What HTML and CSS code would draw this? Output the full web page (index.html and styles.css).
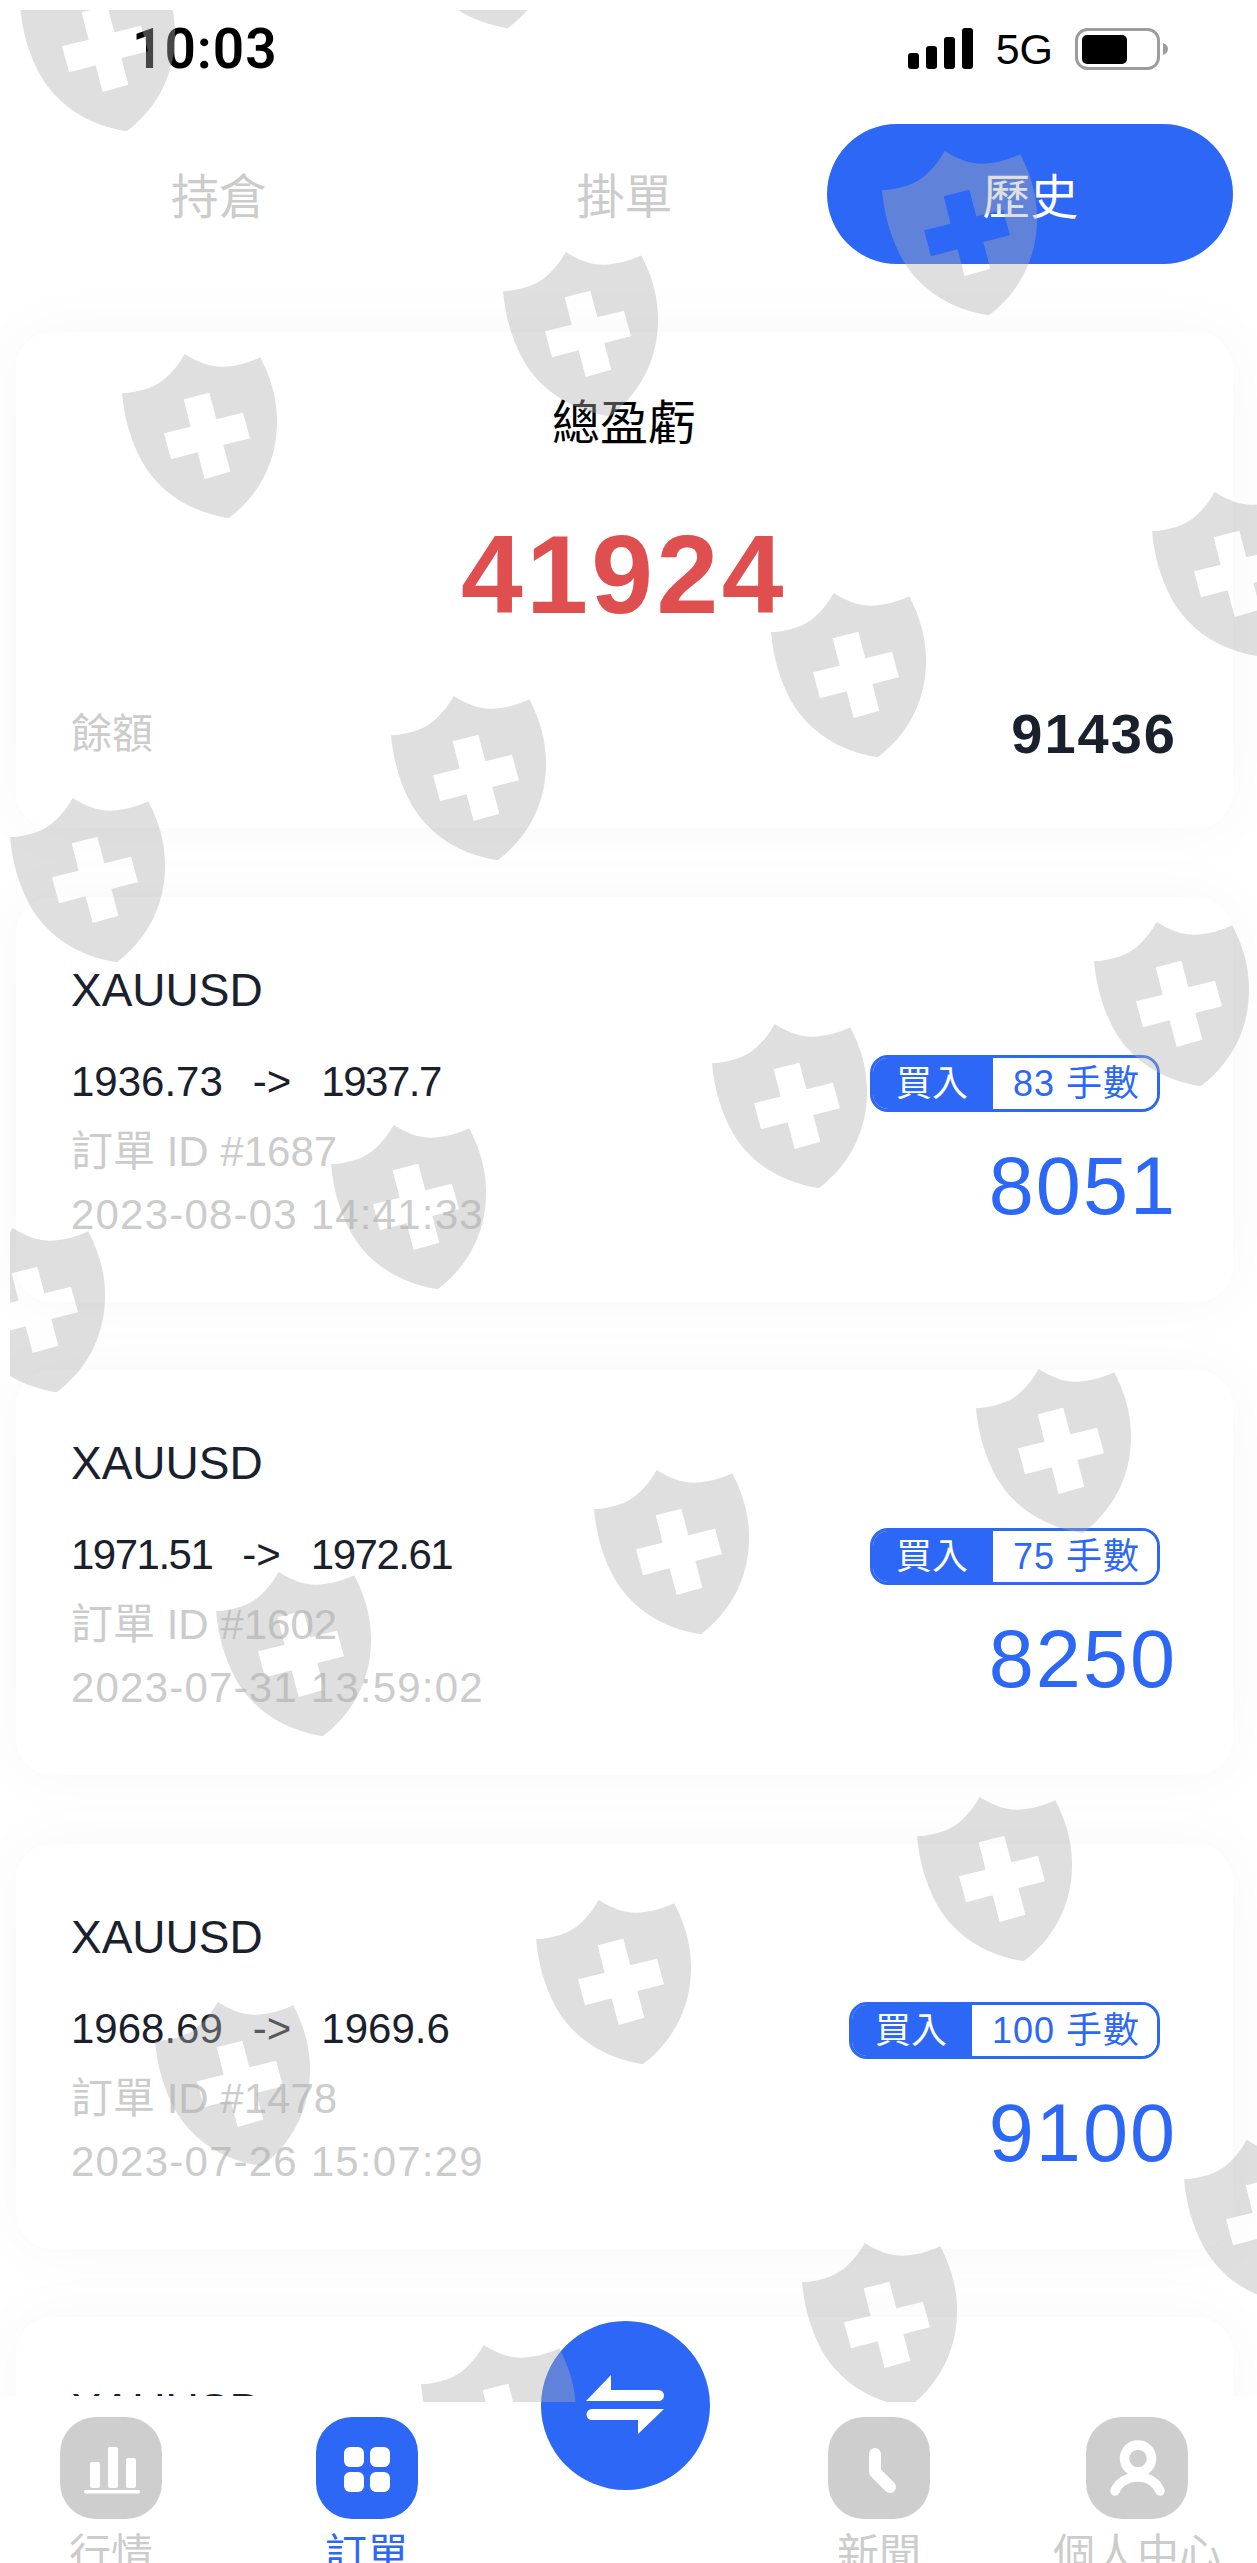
FILE: index.html
```html
<!DOCTYPE html>
<html lang="zh-Hant">
  <head>
    <meta charset="utf-8" />
    <title>歷史</title>
    <link rel="stylesheet" href="styles.css">
  </head>
  <body>
    <div class="page">
      <div class="statusBar">
        <span class="time">10:03</span>
        <div class="statusRight">
          <svg class="signal" width="65" height="42" viewBox="0 0 65 42">
            <rect x="0" y="25" width="11" height="16" rx="3" />
            <rect x="18" y="18" width="11" height="23" rx="3" />
            <rect x="36" y="9" width="11" height="32" rx="3" />
            <rect x="54" y="0" width="11" height="41" rx="3" />
          </svg>
          <span class="network">5G</span>
          <svg class="battery" width="93" height="42" viewBox="0 0 93 42">
            <rect x="1.5" y="1.5" width="82" height="39" rx="11" fill="none" stroke="#9c9c9c" stroke-width="3" />
            <rect x="7" y="7" width="45" height="29" rx="5" />
            <path d="M88 15c3 1 5 3 5 6s-2 5-5 6z" fill="#9c9c9c" />
          </svg>
        </div>
      </div>

      <div class="tabs">
        <div class="tab">持倉</div>
        <div class="tab">掛單</div>
        <div class="tab active">歷史</div>
      </div>

      <div class="list">
        <div class="card summary">
          <p class="summaryTitle">總盈虧</p>
          <p class="summaryTotal">41924</p>
          <div class="balanceRow">
            <span class="balanceLabel">餘額</span>
            <span class="balanceValue">91436</span>
          </div>
        </div>

        <div class="card order">
          <div class="orderLeft">
            <p class="symbol">XAUUSD</p>
            <p class="prices">1936.73<span class="arrow">-&gt;</span><span class="narrow">1937.7</span></p>
            <p class="orderId">訂單 ID #1687</p>
            <p class="orderDate">2023-08-03 14:41:33</p>
          </div>
          <div class="orderRight">
            <div class="badge"><span class="side">買入</span><span class="lots">83 手數</span></div>
            <p class="profit">8051</p>
          </div>
        </div>

        <div class="card order">
          <div class="orderLeft">
            <p class="symbol">XAUUSD</p>
            <p class="prices"><span class="narrow">1971.51</span><span class="arrow">-&gt;</span><span class="narrow">1972.61</span></p>
            <p class="orderId">訂單 ID #1602</p>
            <p class="orderDate">2023-07-31 13:59:02</p>
          </div>
          <div class="orderRight">
            <div class="badge"><span class="side">買入</span><span class="lots">75 手數</span></div>
            <p class="profit">8250</p>
          </div>
        </div>

        <div class="card order">
          <div class="orderLeft">
            <p class="symbol">XAUUSD</p>
            <p class="prices">1968.69<span class="arrow">-&gt;</span>1969.6</p>
            <p class="orderId">訂單 ID #1478</p>
            <p class="orderDate">2023-07-26 15:07:29</p>
          </div>
          <div class="orderRight">
            <div class="badge"><span class="side">買入</span><span class="lots">100 手數</span></div>
            <p class="profit">9100</p>
          </div>
        </div>

        <div class="card order">
          <div class="orderLeft">
            <p class="symbol">XAUUSD</p>
          </div>
        </div>
      </div>

      <div class="nav">
        <div class="navItem">
          <div class="navIcon">
            <svg width="102" height="102" viewBox="0 0 102 102" fill="#fff">
              <rect x="30" y="45" width="10" height="26" rx="2" />
              <rect x="48" y="30" width="10" height="41" rx="2" />
              <rect x="66" y="41" width="10" height="30" rx="2" />
              <rect x="24" y="73" width="56" height="3.5" rx="1.7" />
            </svg>
          </div>
          <span class="navLabel">行情</span>
        </div>
        <div class="navItem current">
          <div class="navIcon">
            <svg width="102" height="102" viewBox="0 0 102 102" fill="#fff">
              <rect x="28" y="30" width="20" height="20" rx="6" />
              <rect x="54" y="30" width="20" height="20" rx="6" />
              <rect x="28" y="55" width="20" height="20" rx="6" />
              <rect x="54" y="55" width="20" height="20" rx="6" />
            </svg>
          </div>
          <span class="navLabel">訂單</span>
        </div>
        <div class="navItem"></div>
        <div class="navItem">
          <div class="navIcon">
            <svg width="102" height="102" viewBox="0 0 102 102" fill="none" stroke="#fff" stroke-width="12" stroke-linecap="round" stroke-linejoin="round">
              <path d="M47 37V55L62 70" />
            </svg>
          </div>
          <span class="navLabel">新聞</span>
        </div>
        <div class="navItem">
          <div class="navIcon">
            <svg width="102" height="102" viewBox="0 0 102 102" fill="none" stroke="#fff" stroke-width="9.5" stroke-linecap="round">
              <circle cx="52" cy="41.5" r="13.5" />
              <path d="M29 74C32 66 41 60 52 60C63 60 71 66 74 74" />
            </svg>
          </div>
          <span class="navLabel">個人中心</span>
        </div>
      </div>

      <div class="swapButton">
        <svg width="169" height="169" viewBox="0 0 169 169" fill="#fff">
          <path d="M70 54V69H117.5A5.5 5.5 0 0 1 117.5 80H45Z" />
          <path d="M97 113V99H51A5.5 5.5 0 0 1 51 88H123Z" />
        </svg>
      </div>

      <!-- watermark over the whole app, starts 10px in from the top left -->
      <svg class="watermark" width="1247" height="2392" viewBox="10 10 1247 2392">
        <defs>
          <symbol id="shield" width="155" height="164.3" viewBox="65 72 465 493">
            <path
              fill-rule="evenodd"
              d="M253 72C290 95 325 110 365 110C405 110 445 98 480 82C515 150 532 215 530 285C527 410 465 505 385 565C270 545 180 490 125 395C90 330 72 265 65 190C125 185 170 170 200 140C225 118 240 95 253 72ZM250 208L271 290L191 310L212 388L292 367L313 447L390 425L369 345L449 325L428 248L348 268L327 188Z"
            />
          </symbol>
        </defs>
        <use href="#shield" x="20" y="-33" />
        <use href="#shield" x="401" y="-136" />
        <use href="#shield" x="882" y="151" />
        <use href="#shield" x="503" y="252" />
        <use href="#shield" x="122" y="354" />
        <use href="#shield" x="1152" y="492" />
        <use href="#shield" x="771" y="593" />
        <use href="#shield" x="391" y="696" />
        <use href="#shield" x="10" y="798" />
        <use href="#shield" x="1094" y="922" />
        <use href="#shield" x="712" y="1024" />
        <use href="#shield" x="331" y="1125" />
        <use href="#shield" x="-50" y="1228" />
        <use href="#shield" x="976" y="1369" />
        <use href="#shield" x="594" y="1470" />
        <use href="#shield" x="216" y="1572" />
        <use href="#shield" x="917" y="1797" />
        <use href="#shield" x="536" y="1900" />
        <use href="#shield" x="155" y="2002" />
        <use href="#shield" x="1184" y="2140" />
        <use href="#shield" x="802" y="2243" />
        <use href="#shield" x="421" y="2345" />
      </svg>
    </div>
  </body>
</html>
```

FILE: styles.css
```css
* {
  box-sizing: border-box;
}

html,
body {
  margin: 0;
  height: 100%;
  overflow: hidden;
}

body {
  background: #fff;
  font-family: "Liberation Sans", "Noto Sans CJK TC", sans-serif;
  color: #1a202c;
}

p {
  margin: 0;
}

.page {
  position: relative;
  width: 1257px;
  height: 2563px;
  overflow: hidden;
}

/* status bar */
.statusBar {
  display: flex;
  justify-content: space-between;
  align-items: center;
  height: 100px;
  padding: 0 89px 2px 132px;
}

.time {
  font-family: Roboto, sans-serif;
  font-size: 55px;
  font-weight: 600;
  letter-spacing: 1px;
  color: #000;
}

.statusRight {
  display: flex;
  align-items: center;
}

.signal {
  margin-right: 23px;
}

.network {
  font-size: 43px;
  color: #000;
  margin-right: 22px;
}

/* tabs */
.tabs {
  display: flex;
  height: 140px;
  margin: 24px 24px 0 16px;
}

.tab {
  flex: 1;
  display: flex;
  justify-content: center;
  align-items: center;
  padding-bottom: 3px;
  font-size: 48px;
  color: #ccc;
  border-radius: 70px;
}

.tab.active {
  background: #2c67f5;
  color: #fff;
}

/* cards */
.list {
  display: flex;
  flex-direction: column;
  gap: 68.5px;
  margin: 68px 24px 0 16px;
}

.card {
  flex: none;
  background: #fff;
  border-radius: 36px;
  box-shadow: 0 0 64px rgba(0, 0, 0, 0.035);
}

.summary {
  height: 496px;
  padding: 67px 56px 0 55px;
}

.summaryTitle {
  font-size: 48px;
  line-height: 50px;
  text-align: center;
  color: #000;
}

.summaryTotal {
  font-size: 111px;
  font-weight: 700;
  line-height: 120px;
  letter-spacing: 3.5px;
  text-align: center;
  color: #e04f50;
  margin-top: 66px;
}

.balanceRow {
  display: flex;
  justify-content: space-between;
  align-items: center;
  height: 60px;
  margin-top: 68px;
}

.balanceLabel {
  font-size: 41px;
  padding-bottom: 6px;
  color: #ccc;
}

.balanceValue {
  font-size: 56px;
  font-weight: 700;
  letter-spacing: 2px;
}

.order {
  display: flex;
  justify-content: space-between;
  height: 405px;
  padding: 66px 58px 0 55px;
}

.symbol {
  font-size: 46px;
  line-height: 54px;
}

.prices {
  font-size: 42px;
  line-height: 50px;
  margin-top: 40px;
}

.arrow {
  margin: 0 30px;
}

.narrow {
  letter-spacing: -1.5px;
}

.orderId {
  font-size: 42px;
  line-height: 50px;
  color: #ccc;
  margin-top: 20px;
}

.orderDate {
  font-size: 42px;
  line-height: 50px;
  letter-spacing: 1.2px;
  color: #ccc;
  margin-top: 13px;
}

.orderRight {
  display: flex;
  flex-direction: column;
  align-items: flex-end;
  padding-top: 92px;
}

.badge {
  display: flex;
  height: 57px;
  margin-right: 15px;
  border: 3px solid #2c67f5;
  border-radius: 18px;
  font-size: 36px;
  line-height: 51px;
  overflow: hidden;
}

.side {
  background: #2c67f5;
  color: #fff;
  padding: 0 25px 0 23px;
}

.lots {
  color: #2c67f5;
  padding: 0 17px 0 20px;
  letter-spacing: 1px;
  background: #fff;
}

.profit {
  font-size: 81px;
  line-height: 90px;
  letter-spacing: 2px;
  color: #2c67f5;
  margin: 29px -2px 0 0;
}

/* bottom nav */
.nav {
  position: absolute;
  left: 0;
  right: 0;
  bottom: 0;
  height: 167px;
  display: flex;
  gap: 92px;
  padding: 21px 0 0 29px;
  background: #fff;
}

.navItem {
  flex: none;
  width: 164px;
  display: flex;
  flex-direction: column;
  align-items: center;
}

.navItem:last-child {
  margin-left: 2px;
}

.navIcon {
  width: 102px;
  height: 102px;
  border-radius: 36px;
  background: #cecece;
}

.navIcon svg {
  display: block;
}

.navLabel {
  margin-top: 12px;
  font-size: 42px;
  line-height: 48px;
  color: #ccc;
  white-space: nowrap;
}

.current .navIcon {
  background: #2c67f5;
}

.current .navLabel {
  color: #2c67f5;
}

.swapButton {
  position: absolute;
  left: 541px;
  top: 2321px;
  width: 169px;
  height: 169px;
  border-radius: 50%;
  background: #2c67f5;
}

.swapButton svg {
  display: block;
}

.watermark {
  position: absolute;
  left: 10px;
  top: 10px;
  fill: rgba(174, 174, 174, 0.4);
  pointer-events: none;
}
```
